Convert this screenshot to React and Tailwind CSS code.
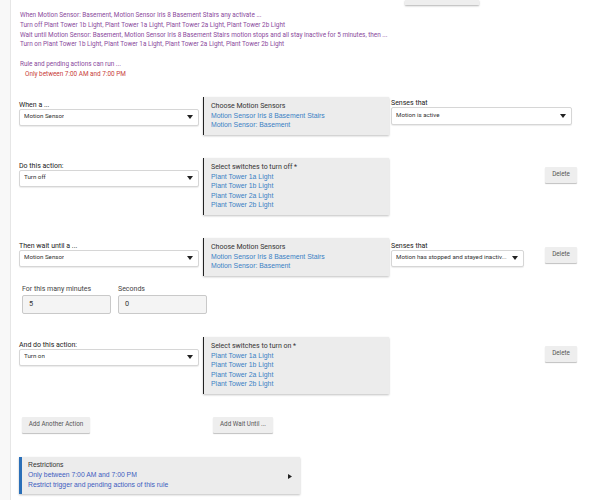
import React from 'react';

const roboto = { fontFamily: 'Roboto, "Liberation Sans", sans-serif' };
const arial = { fontFamily: '"Liberation Sans", Arial, sans-serif' };

const Caret = () => (
  <svg width="6" height="4" viewBox="0 0 6 4" className="shrink-0">
    <path d="M0 0 L6 0 L3 4 Z" fill="#222" />
  </svg>
);

const Select = ({ value, width = 'w-[180px]', height = 'h-[17px]' }) => (
  <div className={`${width} ${height} flex items-center justify-between pl-[4px] pr-[5px] bg-white border border-[#d6d6d6] rounded-[2px] shadow-[0_1px_1px_rgba(0,0,0,0.08)]`}>
    <span className="text-[6.2px] text-[#333] truncate">{value}</span>
    <Caret />
  </div>
);

const Field = ({ label, value, width, height }) => (
  <div className="flex flex-col">
    <div className="text-[7px] leading-[10px] text-[#222]">{label}</div>
    <div className="mt-[-1px]">
      <Select value={value} width={width} height={height} />
    </div>
  </div>
);

const DeviceBox = ({ title, items, height }) => (
  <div
    className={`w-[186px] ${height} bg-[#ececec] border-l border-[#222] shadow-[0_1px_2px_rgba(0,0,0,0.25)] pl-[7px] pt-[5px] text-[6.9px] leading-[9.4px]`}
    style={arial}
  >
    <div className="text-[#333] text-[7px]" style={roboto}>{title}</div>
    {items.map((it) => (
      <div key={it} className="text-[#3a7fc4]">{it}</div>
    ))}
  </div>
);

const GreyButton = ({ children, className = '' }) => (
  <div className={`h-[16px] flex items-center justify-center bg-[#eeeeee] text-[6.3px] text-[#555] rounded-[1px] shadow-[0_1px_1px_rgba(0,0,0,0.25)] ${className}`}>
    {children}
  </div>
);

const Input = ({ value }) => (
  <div className="w-[89px] h-[19px] flex items-center pl-[6px] bg-[#f4f4f4] border border-[#c9c9c9] rounded-[2px] text-[7.3px] text-[#333]">
    {value}
  </div>
);

const summary = [
  'When Motion Sensor: Basement, Motion Sensor Iris 8 Basement Stairs any activate ...',
  'Turn off Plant Tower 1b Light, Plant Tower 1a Light, Plant Tower 2a Light, Plant Tower 2b Light',
  'Wait until Motion Sensor: Basement, Motion Sensor Iris 8 Basement Stairs motion stops and all stay inactive for 5 minutes, then ...',
  'Turn on Plant Tower 1b Light, Plant Tower 1a Light, Plant Tower 2a Light, Plant Tower 2b Light',
];

const sensors = ['Motion Sensor Iris 8 Basement Stairs', 'Motion Sensor: Basement'];
const towers = ['Plant Tower 1a Light', 'Plant Tower 1b Light', 'Plant Tower 2a Light', 'Plant Tower 2b Light'];

export default function App() {
  return (
    <div className="w-[591px] h-[500px] flex bg-white overflow-hidden" style={roboto}>
      {/* left gutter */}
      <div className="w-[11px] h-full bg-[#f8f8f8] border-r border-[#e6e6e6] shrink-0" />

      <div className="flex-1 relative pl-[8px]">
        {/* bottom of a button cut off at top */}
        <div className="absolute left-[394px] top-0 w-[74px] h-[5px] bg-[#eeeeee] shadow-[0_1px_2px_rgba(0,0,0,0.3)]" />

        {/* summary */}
        <div className="pt-[11px] pl-[1px] text-[6.4px] leading-[9.8px] text-[#8a4a9c]">
          {summary.map((s) => (
            <div key={s}>{s}</div>
          ))}
          <div className="h-[9.8px]" />
          <div>Rule and pending actions can run ...</div>
          <div className="pl-[5px] text-[#c8403a]">Only between 7:00 AM and 7:00 PM</div>
        </div>

        {/* trigger row */}
        <div className="mt-[17px] flex items-start">
          <div className="pt-[3px]"><Field label="When a ..." value="Motion Sensor" /></div>
          <div className="ml-[4px]"><DeviceBox title="Choose Motion Sensors" items={sensors} height="h-[38px]" /></div>
          <div className="ml-[2px] pt-[1px]"><Field label="Senses that" value="Motion is active" width="w-[181px]" height="h-[18px]" /></div>
        </div>

        {/* action row */}
        <div className="mt-[23px] flex items-start">
          <div className="pt-[3px]"><Field label="Do this action:" value="Turn off" /></div>
          <div className="ml-[4px]"><DeviceBox title="Select switches to turn off *" items={towers} height="h-[57px]" /></div>
          <div className="ml-[156px] pt-[9px]"><GreyButton className="w-[32px]">Delete</GreyButton></div>
        </div>

        {/* wait row */}
        <div className="mt-[23px] flex items-start">
          <div className="pt-[3px]"><Field label="Then wait until a ..." value="Motion Sensor" /></div>
          <div className="ml-[4px]"><DeviceBox title="Choose Motion Sensors" items={sensors} height="h-[38px]" /></div>
          <div className="ml-[2px] pt-[3px]"><Field label="Senses that" value="Motion has stopped and stayed inactiv..." width="w-[133px]" /></div>
          <div className="ml-[21px] pt-[9px]"><GreyButton className="w-[32px]">Delete</GreyButton></div>
        </div>

        {/* duration */}
        <div className="mt-[8px] pl-[3px] flex gap-[7px]">
          <div className="flex flex-col">
            <div className="text-[7px] leading-[10px] text-[#444]">For this many minutes</div>
            <div className="mt-[1px]"><Input value="5" /></div>
          </div>
          <div className="flex flex-col">
            <div className="text-[7px] leading-[10px] text-[#444]">Seconds</div>
            <div className="mt-[1px]"><Input value="0" /></div>
          </div>
        </div>

        {/* second action row */}
        <div className="mt-[23px] flex items-start">
          <div className="pt-[3px]"><Field label="And do this action:" value="Turn on" /></div>
          <div className="ml-[4px]"><DeviceBox title="Select switches to turn on *" items={towers} height="h-[57px]" /></div>
          <div className="ml-[156px] pt-[9px]"><GreyButton className="w-[32px]">Delete</GreyButton></div>
        </div>

        {/* add buttons */}
        <div className="mt-[23px] flex">
          <GreyButton className="ml-[3px] w-[68px]">Add Another Action</GreyButton>
          <GreyButton className="ml-[123px] w-[60px]">Add Wait Until ...</GreyButton>
        </div>

        {/* restrictions */}
        <div
          className="mt-[24px] w-[281px] h-[37px] flex items-center bg-[#ececec] border-l-[3px] border-[#2a6fb8] shadow-[0_1px_2px_rgba(0,0,0,0.25)] pl-[6px] pr-[8px]"
          style={arial}
        >
          <div className="flex-1 text-[6.8px] leading-[9.8px]">
            <div className="text-[#333]">Restrictions</div>
            <div className="text-[#3d5cbf]">Only between 7:00 AM and 7:00 PM</div>
            <div className="text-[#3d5cbf]">Restrict trigger and pending actions of this rule</div>
          </div>
          <svg width="4" height="5" viewBox="0 0 4 5" className="mt-[3px]">
            <path d="M0 0 L4 2.5 L0 5 Z" fill="#222" />
          </svg>
        </div>
      </div>
    </div>
  );
}
